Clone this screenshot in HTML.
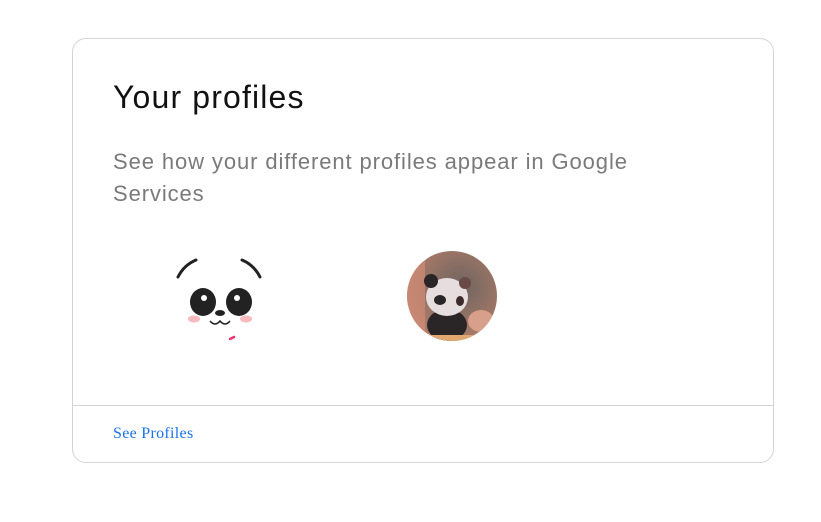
<!DOCTYPE html>
<html><head><meta charset="utf-8"><style>
html,body{margin:0;padding:0;background:#fff;width:821px;height:522px;overflow:hidden}
.card{position:absolute;left:72px;top:38px;width:700px;height:423px;border:1px solid #d4d4d4;border-radius:14px;box-sizing:content-box}
h1{position:absolute;left:40px;top:40px;margin:0;font:400 32px "Liberation Sans",sans-serif;color:#111;white-space:nowrap;letter-spacing:1.15px}
p{position:absolute;left:40px;top:107px;margin:0;width:600px;font:400 22px/32px "Liberation Sans",sans-serif;color:#7a7a7a;letter-spacing:0.9px}
.div{position:absolute;left:0;right:0;top:366px;border-top:1px solid #d4d4d4}
a{position:absolute;left:40px;top:386px;font:16px "Liberation Serif",serif;color:#1a73e8;text-decoration:none;letter-spacing:0.3px}
</style></head><body>
<div class="card">
<h1>Your profiles</h1>
<p>See how your different profiles appear in Google Services</p>
<svg style="position:absolute;left:88px;top:202px" width="120" height="120" viewBox="160 240 120 120">
<path d="M177 276 Q183 264 195 259" stroke="#222" stroke-width="3" fill="none" stroke-linecap="round"/>
<path d="M241 259 Q253 264 259 276" stroke="#222" stroke-width="3" fill="none" stroke-linecap="round"/>
<ellipse cx="202" cy="301" rx="13" ry="14" fill="#222"/>
<ellipse cx="238" cy="301" rx="13" ry="14" fill="#222"/>
<circle cx="203" cy="297" r="3" fill="#fff"/>
<circle cx="236" cy="297" r="3" fill="#fff"/>
<ellipse cx="193" cy="318" rx="6" ry="3.5" fill="#f7b9bd"/>
<ellipse cx="245" cy="318" rx="6" ry="3.5" fill="#f7b9bd"/>
<ellipse cx="219" cy="312" rx="5" ry="3" fill="#222"/>
<path d="M209 320 Q214 326 219 320 Q224 326 229 320" stroke="#222" stroke-width="1.5" fill="none"/>
<path d="M229 338 L233 336" stroke="#e8336b" stroke-width="2.5" stroke-linecap="round"/>
</svg>
<svg style="position:absolute;left:334px;top:212px" width="90" height="90" viewBox="0 0 90 90">
<defs><radialGradient id="g" cx="60%" cy="40%" r="70%"><stop offset="0" stop-color="#6e6460"/><stop offset="1" stop-color="#b8806a"/></radialGradient>
<clipPath id="c"><circle cx="45" cy="45" r="45"/></clipPath></defs>
<g clip-path="url(#c)">
<rect width="90" height="90" fill="url(#g)"/>
<rect x="0" y="0" width="18" height="90" fill="#d9907a" opacity=".6"/>
<ellipse cx="74" cy="70" rx="13" ry="11" fill="#d8a08a"/>
<ellipse cx="40" cy="74" rx="20" ry="16" fill="#2a2628"/>
<ellipse cx="40" cy="46" rx="21" ry="19" fill="#e6dede"/>
<circle cx="24" cy="30" r="7" fill="#2a2628"/>
<circle cx="58" cy="32" r="6" fill="#6a4a44"/>
<ellipse cx="33" cy="49" rx="6" ry="5" fill="#2a2628"/>
<ellipse cx="53" cy="50" rx="4" ry="5" fill="#3a2a2a"/>
<rect x="10" y="84" width="70" height="6" fill="#e0a870"/>
</g></svg>
<div class="div"></div>
<a href="#">See Profiles</a>
</div>
</body></html>
